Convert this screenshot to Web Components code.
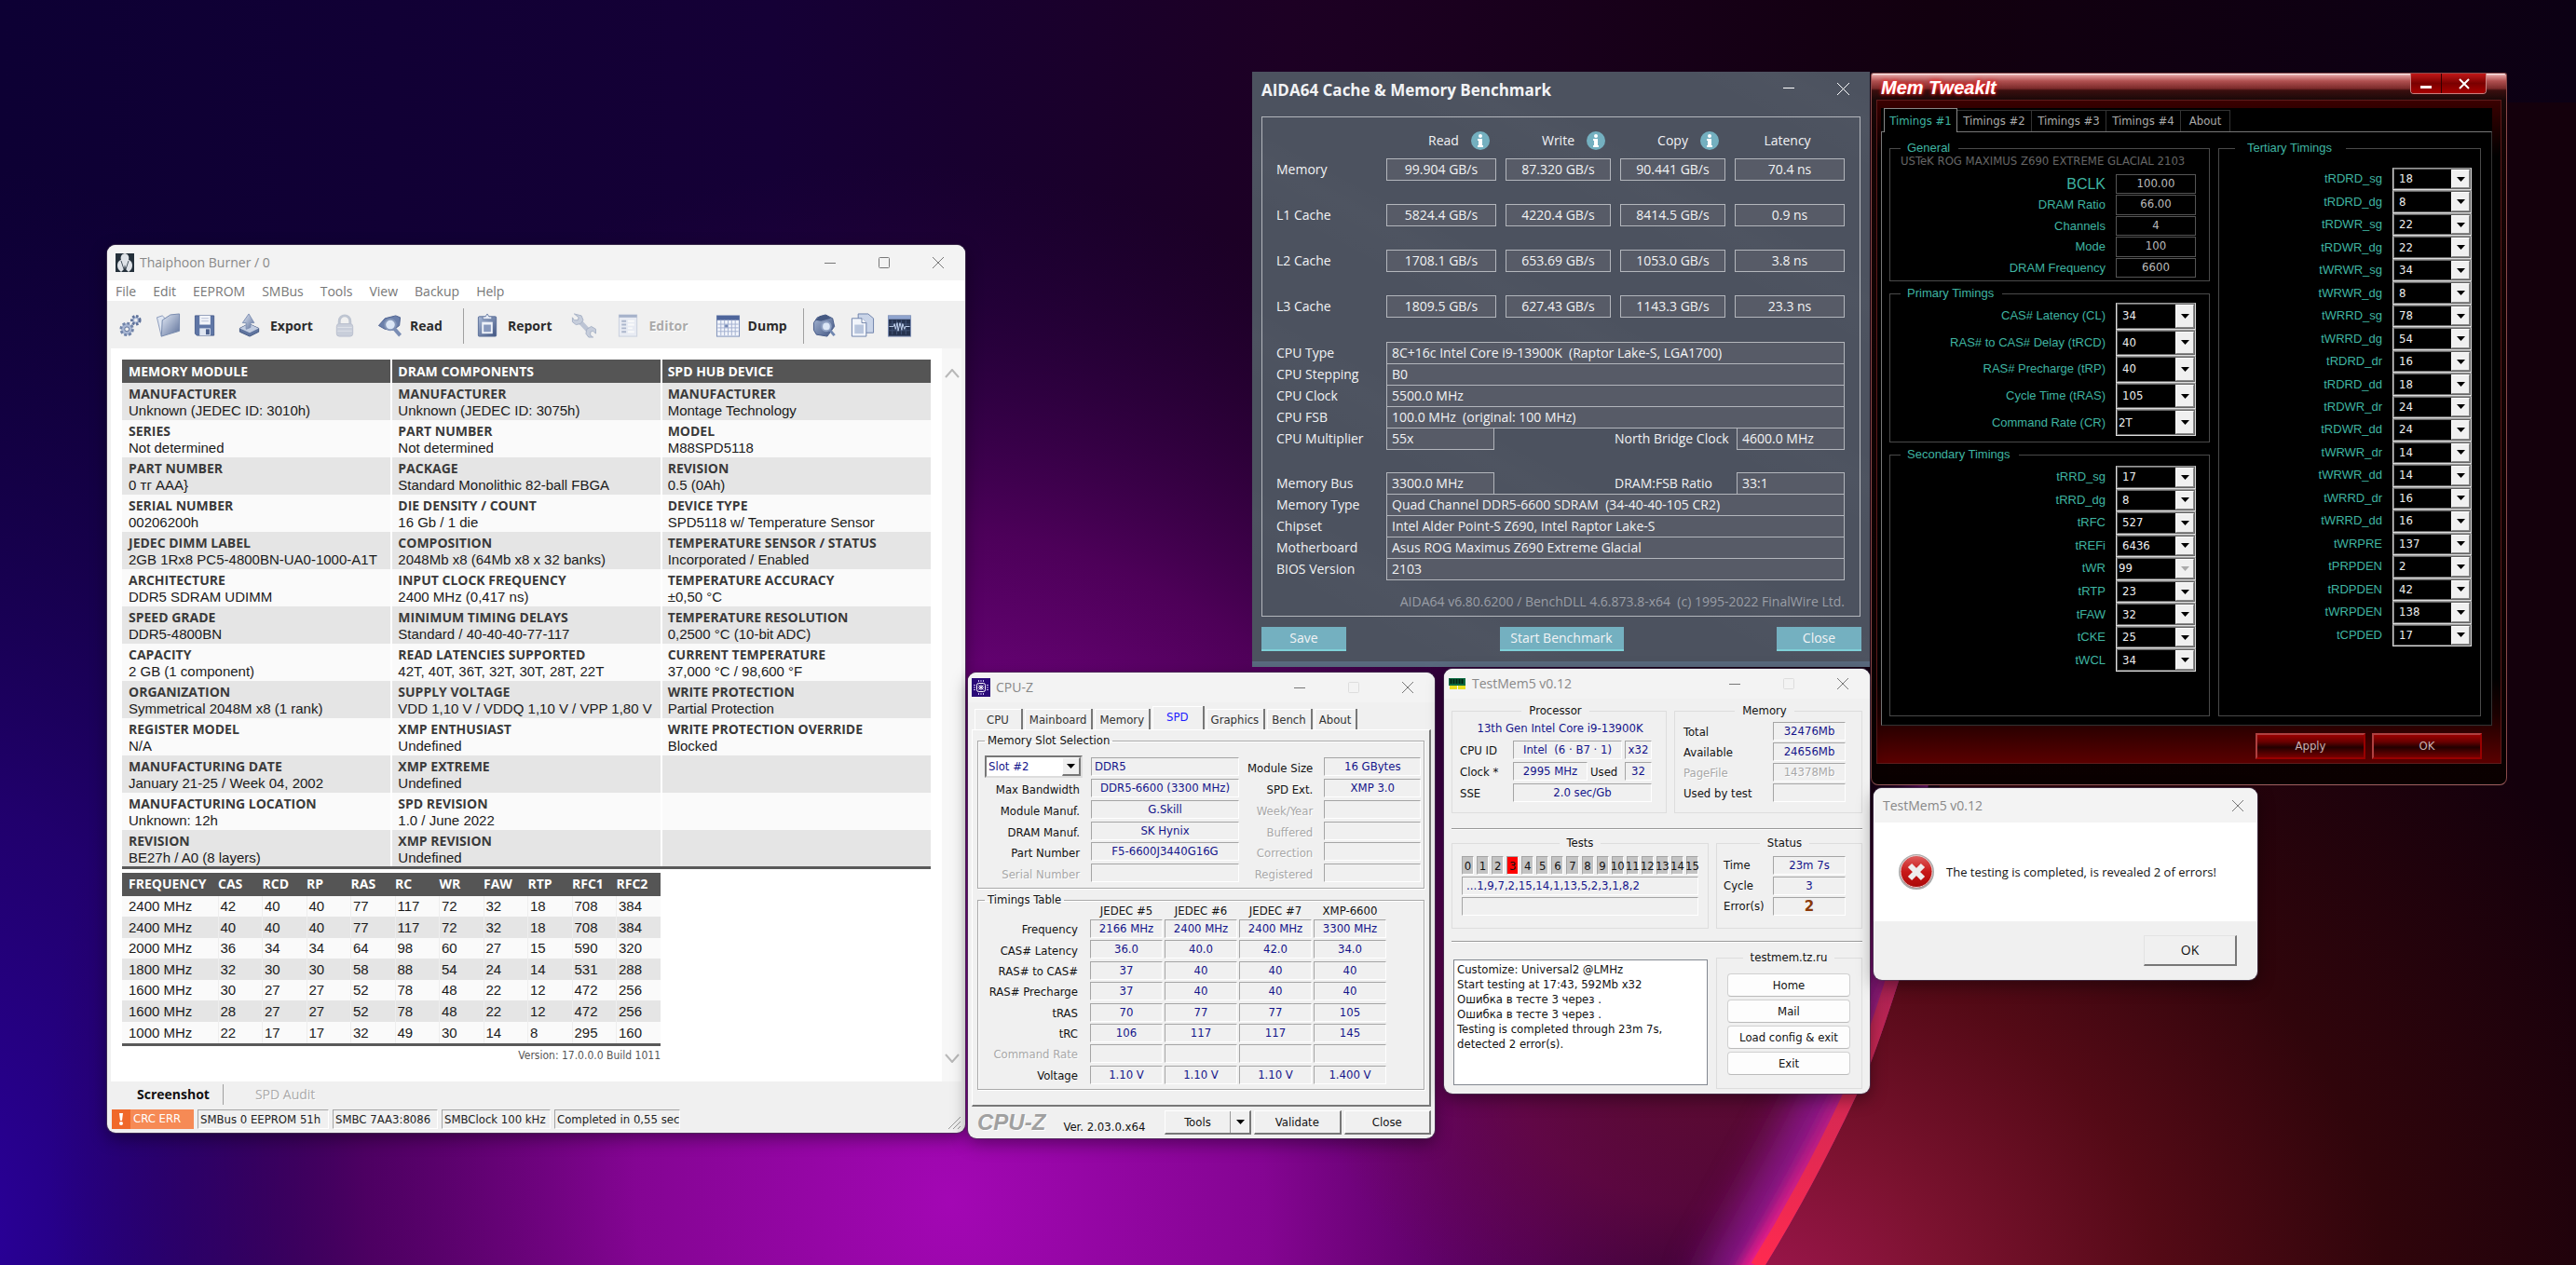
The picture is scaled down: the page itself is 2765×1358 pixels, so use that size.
<!DOCTYPE html>
<html lang="en">
<head>
<meta charset="utf-8">
<title>Desktop</title>
<style>
html,body{margin:0;height:100%;background:#12002e}
body{--ui:"Open Sans","Noto Sans",sans-serif;--tahoma:"DejaVu Sans Condensed","DejaVu Sans","Noto Sans",sans-serif;--arial:"Liberation Sans",sans-serif;font:13px/16px var(--tahoma);color:#111}
</style>
</head>
<body>
<desk-top>
  <thaiphoon-window></thaiphoon-window>
  <aida-window></aida-window>
  <tweak-window></tweak-window>
  <cpuz-window></cpuz-window>
  <testmem-window></testmem-window>
  <message-box></message-box>
</desk-top>
<script>
const base = `*{box-sizing:border-box}button,select,textarea{font:inherit;color:inherit;margin:0}h1,p{margin:0}table{border-collapse:collapse}`;
function define(name, css, html) {
  customElements.define(name, class extends HTMLElement {
    constructor() {
      super();
      const root = this.attachShadow({mode: 'open'});
      const t = document.createElement('template');
      t.innerHTML = `<style>${base}${css}</style>${typeof html === 'function' ? html(this) : html}`;
      root.append(t.content.cloneNode(true));
    }
  });
}

/* wallpaper and the free canvas for the windows */
define('desk-top', `
:host{display:block;position:relative;min-height:100vh;overflow:hidden}
svg{position:absolute;inset:0;width:100%;height:100%}
::slotted(*){position:absolute}`,
`<svg viewBox="0 0 2765 1358" preserveAspectRatio="none" aria-hidden="true">
<defs>
<linearGradient id="sky" x1="0" y1="0" x2="1" y2="0"><stop offset="0" stop-color="#0d0034"/><stop offset=".3" stop-color="#150036"/><stop offset=".5" stop-color="#1d0024"/><stop offset=".75" stop-color="#12000f"/><stop offset="1" stop-color="#0c0014"/></linearGradient>
<radialGradient id="blue" gradientUnits="userSpaceOnUse" cx="0" cy="0" r="1" gradientTransform="translate(-40 1330) scale(700 1150)"><stop offset="0" stop-color="#2a009c"/><stop offset=".4" stop-color="#270080" stop-opacity=".75"/><stop offset="1" stop-color="#1a0050" stop-opacity="0"/></radialGradient>
<radialGradient id="mag" gradientUnits="userSpaceOnUse" cx="0" cy="0" r="1" gradientTransform="translate(1020 1290) rotate(-12) scale(960 1120)"><stop offset="0" stop-color="#a307b4"/><stop offset=".35" stop-color="#8a0598" stop-opacity=".95"/><stop offset=".65" stop-color="#5e0068" stop-opacity=".75"/><stop offset="1" stop-color="#2a0040" stop-opacity="0"/></radialGradient>
<radialGradient id="wine" gradientUnits="userSpaceOnUse" cx="0" cy="0" r="1" gradientTransform="translate(1830 1130) scale(420 330)"><stop offset="0" stop-color="#5a0c2e"/><stop offset=".5" stop-color="#6a0a40" stop-opacity=".7"/><stop offset="1" stop-color="#70084c" stop-opacity="0"/></radialGradient>
<radialGradient id="right" gradientUnits="userSpaceOnUse" cx="0" cy="0" r="1" gradientTransform="translate(1880 1400) scale(1050 900)"><stop offset="0" stop-color="#a01650"/><stop offset=".2" stop-color="#7c1230"/><stop offset=".42" stop-color="#540a16"/><stop offset=".65" stop-color="#30050b"/><stop offset="1" stop-color="#14000c"/></radialGradient>
<linearGradient id="core" gradientUnits="userSpaceOnUse" x1="0" y1="1000" x2="0" y2="1358"><stop offset="0" stop-color="#8c1c50"/><stop offset=".35" stop-color="#c82854"/><stop offset="1" stop-color="#ff2a50"/></linearGradient>
<linearGradient id="glow" gradientUnits="userSpaceOnUse" x1="0" y1="1000" x2="0" y2="1358"><stop offset="0" stop-color="#7a1860"/><stop offset=".4" stop-color="#a01c80"/><stop offset="1" stop-color="#f01c88"/></linearGradient>
<filter id="soft" x="-60%" y="-20%" width="220%" height="140%"><feGaussianBlur stdDeviation="22"/></filter>
<filter id="soft2" x="-60%" y="-20%" width="220%" height="140%"><feGaussianBlur stdDeviation="7"/></filter>
<clipPath id="in"><path d="M0 0H2120Q2085 880 2038 1053Q2007 1150 1993 1175Q1946 1275 1895 1358H0Z"/></clipPath>
</defs>
<rect width="2765" height="1358" fill="url(#sky)"/>
<rect width="2765" height="1358" fill="url(#blue)"/>
<rect width="2765" height="1358" fill="url(#mag)"/>
<rect width="2765" height="1358" fill="url(#wine)"/>
<path d="M2120 560Q2085 880 2038 1053Q2007 1150 1993 1175Q1946 1275 1895 1358H2765V110H2120Z" fill="url(#right)"/>
<g clip-path="url(#in)">
<path d="M2100 820Q2060 980 2020 1053Q1980 1150 1965 1185Q1920 1275 1850 1398" fill="none" stroke="#9a1ca0" stroke-width="70" filter="url(#soft)" opacity=".8"/>
<path d="M2100 820Q2060 980 2028 1053Q1993 1150 1979 1180Q1932 1275 1865 1388" fill="none" stroke="url(#glow)" stroke-width="24" filter="url(#soft2)"/>
<path d="M2100 820Q2065 980 2036 1053Q2005 1150 1991 1175Q1944 1275 1890 1362" fill="none" stroke="url(#core)" stroke-width="24"/>
</g></svg><slot></slot>`);

/* Windows 11 frame: title bar, caption buttons and content */
define('win-frame', `
:host{display:block;background:#f0f0f0;border-radius:9px;overflow:hidden;box-shadow:0 0 0 1px #4a3a55aa,0 6px 18px #0006;height:100%}
header{display:flex;align-items:center;height:var(--bar,32px);background:#f3f3f3;padding-left:var(--pad,8px)}
h1{flex:1;margin-left:6px;font:400 14px/20px var(--ui);color:#888}
button{width:var(--cap,58px);height:100%;border:0;background:none;padding:0;display:grid;place-items:center}
svg{display:block}`,
el => {
  const m = el.getAttribute('buttons') || 'close', faded = m === 'fixed';
  return `<header><slot name="icon"></slot><h1>${el.getAttribute('heading')}</h1>${m !== 'close' ? `<button aria-label="Minimize"><svg width="14" height="14" fill="none" stroke="#777"><path d="M1 7.500H13"/></svg></button>
<button aria-label="Maximize" ${faded ? 'disabled' : ''}><svg width="14" height="14" fill="none" stroke="${faded ? '#ddd' : '#777'}"><rect x="1.500" y="1.500" width="11" height="11" rx="1"/></svg></button>` : ''}
<button aria-label="Close"><svg width="14" height="14" fill="none" stroke="#777"><path d="M1 1L13 13M13 1L1 13"/></svg></button></header><slot></slot>`;
});

/* titled frame */
define('group-box', `
:host{display:block}
fieldset{margin:0;min-width:0;height:100%;border:1px solid var(--line,#a9a9a9);box-shadow:var(--shade,none);padding:var(--inset,0)}
legend{padding:var(--lp,0 3px);margin:var(--lm,0);line-height:var(--lh,16px);color:var(--lc,inherit);font:var(--lf,inherit)}`,
el => `<fieldset><legend>${el.getAttribute('heading')}</legend><slot></slot></fieldset>`);

/* read-only sunken value */
define('value-box', `
:host{display:block;height:20px;border:1px solid #a5a5a5;border-right-color:#fff;border-bottom-color:#fff;text-align:center;color:#14148a;white-space:pre;overflow:hidden;font:13px/18px var(--tahoma)}
:host([off]){color:#a8a8a8;text-shadow:1px 1px #fff}`, `<slot></slot>`);

/* ---------- toolbar pictures ---------- */
const tint = `<defs><linearGradient id="g" x1="0" y1="0" x2="1" y2="1"><stop offset="0" stop-color="#e3eaf6"/><stop offset="1" stop-color="#5d7099"/></linearGradient><linearGradient id="d" x1="0" y1="0" x2="1" y2="1"><stop offset="0" stop-color="#a9b9d6"/><stop offset="1" stop-color="#3f5380"/></linearGradient></defs>`;
const pics = {
 gears:`<circle cx="9" cy="18" r="6.500" fill="#a8b6d2" stroke="#7083a8" stroke-width="3" stroke-dasharray="3 2"/><circle cx="9" cy="18" r="5" fill="#a8b6d2"/><circle cx="9" cy="18" r="2.500" fill="#f0f0f0" stroke="#5d7099"/><circle cx="19" cy="8" r="4.500" fill="#a8b6d2" stroke="#5d7099" stroke-width="3" stroke-dasharray="2.400 1.800"/><circle cx="19" cy="8" r="1.800" fill="#f0f0f0"/>`,
 folder:`<path d="M1 5L7 3L10 6L14 5L14 22L6 26Z" fill="#dfe6f2" stroke="#8a9aba"/><path d="M13 4L16 2L26 1V20L6 26L7 8Z" fill="url(#g)" stroke="#7789ad"/>`,
 floppy:`<path d="M2 3H23V25H4L2 23Z" fill="#5f76a6" stroke="#4b5f8c"/><rect x="7" y="3" width="12" height="10" fill="#f3f5fa"/><path d="M9 6H17M9 9H17" stroke="#b7c1d6"/><rect x="7" y="17" width="12" height="8" fill="#dfe5f0"/><rect x="14" y="18" width="4" height="6" fill="#4b5f8c"/>`,
 export:`<path d="M2 17L12 12L23 17V21L13 26L2 21Z" fill="#60759f" stroke="#40547f"/><path d="M2 17L12 12L23 17L13 22Z" fill="#c2cde1"/><path d="M9 18V11H5L12 1L18 11H14V16Z" fill="url(#g)" stroke="#7e90b3"/>`,
 lock:`<g opacity=".7"><path d="M7 13V9A6 6 0 0 1 19 9V13" fill="none" stroke="#a9b2c4" stroke-width="3"/><rect x="4" y="12" width="18" height="14" rx="3" fill="#b7bfd0" stroke="#a2abc0"/><path d="M5 16H21M5 20H21" stroke="#d7dce6"/></g>`,
 read:`<path d="M1 14L8 6L20 3L25 5L24 14L17 19L8 18Z" fill="#6b80ab" stroke="#4d6190"/><circle cx="14" cy="13" r="6" fill="#dbe6f6" stroke="#8597b9" stroke-width="2"/><path d="M18 17L25 25" stroke="#7a8db4" stroke-width="4"/>`,
 report:`<rect x="3" y="4" width="20" height="22" rx="1" fill="url(#d)" stroke="#5b6e98"/><path d="M8 7V4H11L13 1L15 4H18V7Z" fill="#e6ebf5" stroke="#6d80a6"/><rect x="7" y="10" width="12" height="13" fill="#eef2f9"/><rect x="9" y="13" width="8" height="8" fill="#8899bd"/>`,
 wrench:`<path d="M7 7L20 21" stroke="#bcc4d4" stroke-width="5"/><path d="M3 1L8 5L7 8L3 8L1 5V10L5 13L10 12L13 8L11 3Z" fill="#c6cddb" stroke="#a8b2c6"/><path d="M17 18L22 15L27 18V23L24 20L21 21L21 25L24 27H19L16 23Z" fill="#c6cddb" stroke="#a8b2c6"/>`,
 editor:`<g opacity=".65"><rect x="3" y="2" width="20" height="24" fill="#e3e9f4" stroke="#b5bfd3"/><rect x="3" y="2" width="20" height="3" fill="#7f91b5"/><path d="M6 9H11M6 13H11M6 17H11M6 21H11" stroke="#8797b8" stroke-width="2"/><path d="M13 9H20M13 13H20M13 17H18M13 21H20" stroke="#fff" stroke-width="2"/></g>`,
 dump:`<rect x="1" y="3" width="25" height="23" fill="#f1f4fb" stroke="#7c8fb7"/><rect x="1" y="3" width="25" height="5" fill="#4e659b"/><path d="M5.500 8V25M9.500 8V25M13.500 8V25M17.500 8V25M21.500 8V25M2 12.500H25M2 16.500H25M2 20.500H25" stroke="#a3b1d0"/><rect x="10" y="13" width="3" height="3" fill="#7388b5"/>`,
 find:`<path d="M1 11L5 5L14 2L22 6L24 15L16 26L4 24L1 19Z" fill="url(#d)" stroke="#465a87"/><path d="M3 8L8 3L15 2L20 6L9 9Z" fill="#455982"/><circle cx="15" cy="15" r="5" fill="#dce7f7" stroke="#8fa1c3" stroke-width="2"/><path d="M19 19L24 25" stroke="#7187b0" stroke-width="3"/>`,
 copy:`<path d="M9 1H20L26 6V22H9Z" fill="#c9d4e8" stroke="#6d81aa"/><path d="M2 6H13L18 11V26H2Z" fill="#f2f5fb" stroke="#6d81aa"/><rect x="5" y="13" width="10" height="10" fill="#b8c5dd"/><path d="M13 6V11H18" fill="#fff" stroke="#6d81aa"/>`,
 wave:`<rect x="1" y="3" width="25" height="23" fill="#26334f" stroke="#7b8cb2"/><rect x="1" y="3" width="25" height="4" fill="#8fa3cd"/><path d="M5.500 8V24M10.500 8V24M15.500 8V24M20.500 8V24M2 12.500H25M2 19.500H25" stroke="#435578"/><path d="M2 15H7L8 12L9 18L11 11L12 20L14 11L16 19L17 12L19 18L20 15H25" fill="none" stroke="#c6d6f3"/>`
};
define('tool-button', `
:host{display:flex}
button{display:flex;align-items:center;border:0;background:none;padding:0;gap:8px;font:700 14px/20px var(--ui);color:#2b2b2b}
:host([wide]) button{padding:0 8px}
button:disabled{color:#aaa;text-shadow:1px 1px #fff}svg{display:block}`,
el => `<button ${el.hasAttribute('off') ? 'disabled' : ''} aria-label="${el.getAttribute('pic')}"><svg width="27" height="27" viewBox="0 0 27 28">${tint}${pics[el.getAttribute('pic')]}</svg><slot></slot></button>`);

/* ---------- Thaiphoon Burner ---------- */
const spd = [
['MANUFACTURER','Unknown (JEDEC ID: 3010h)','MANUFACTURER','Unknown (JEDEC ID: 3075h)','MANUFACTURER','Montage Technology'],
['SERIES','Not determined','PART NUMBER','Not determined','MODEL','M88SPD5118'],
['PART NUMBER','0 тг AAA}','PACKAGE','Standard Monolithic 82-ball FBGA','REVISION','0.5 (0Ah)'],
['SERIAL NUMBER','00206200h','DIE DENSITY / COUNT','16 Gb / 1 die','DEVICE TYPE','SPD5118 w/ Temperature Sensor'],
['JEDEC DIMM LABEL','2GB 1Rx8 PC5-4800BN-UA0-1000-A1T','COMPOSITION','2048Mb x8 (64Mb x8 x 32 banks)','TEMPERATURE SENSOR / STATUS','Incorporated / Enabled'],
['ARCHITECTURE','DDR5 SDRAM UDIMM','INPUT CLOCK FREQUENCY','2400 MHz (0,417 ns)','TEMPERATURE ACCURACY','±0,50 °C'],
['SPEED GRADE','DDR5-4800BN','MINIMUM TIMING DELAYS','Standard / 40-40-40-77-117','TEMPERATURE RESOLUTION','0,2500 °C (10-bit ADC)'],
['CAPACITY','2 GB (1 component)','READ LATENCIES SUPPORTED','42T, 40T, 36T, 32T, 30T, 28T, 22T','CURRENT TEMPERATURE','37,000 °C / 98,600 °F'],
['ORGANIZATION','Symmetrical 2048M x8 (1 rank)','SUPPLY VOLTAGE','VDD 1,10 V / VDDQ 1,10 V / VPP 1,80 V','WRITE PROTECTION','Partial Protection'],
['REGISTER MODEL','N/A','XMP ENTHUSIAST','Undefined','WRITE PROTECTION OVERRIDE','Blocked'],
['MANUFACTURING DATE','January 21-25 / Week 04, 2002','XMP EXTREME','Undefined','',''],
['MANUFACTURING LOCATION','Unknown: 12h','SPD REVISION','1.0 / June 2022','',''],
['REVISION','BE27h / A0 (8 layers)','XMP REVISION','Undefined','','']];
const freq = ['2400 42 40 40 77 117 72 32 18 708 384','2400 40 40 40 77 117 72 32 18 708 384','2000 36 34 34 64 98 60 27 15 590 320','1800 32 30 30 58 88 54 24 14 531 288','1600 30 27 27 52 78 48 22 12 472 256','1600 28 27 27 52 78 48 22 12 472 256','1000 22 17 17 32 49 30 14 8 295 160'];
define('thaiphoon-window', `
:host{display:block;left:115px;top:263px;width:921px;height:953px}
win-frame{--bar:38px;--pad:9px}
nav{display:flex;gap:18px;background:#fff;height:22px;padding:2px 0 0 9px;align-items:center}
nav button{border:0;background:none;padding:0;font:14px/20px var(--ui);color:#777}
.bar{display:flex;align-items:center;height:51px;padding:2px 0 0 12px}
.bar hr{width:1px;height:38px;border:0;margin:0;background:#a0a0a0}
.bar div{display:flex;gap:13px;align-items:center}
.a{width:370px}.b{width:364px;padding-left:4px}.c{padding-left:9px}
main{display:flex;background:#fff;margin:0 4px;height:787px}
.page{flex:1;padding:12px 12px 0}
aside{width:21px;background:#f7f7f7;display:flex;flex-direction:column;justify-content:space-between;align-items:center;padding:22px 0 20px}
table{table-layout:fixed;font:15px/17px var(--arial);color:#1a1a1a;border-bottom:3px solid #595959}
th{background:#555;color:#fff;font:700 14px/18px var(--ui);text-align:left;padding:0 0 0 7px;height:25px}
td{padding:0 0 0 7px;white-space:nowrap}
.spd{width:868px}.spd td{height:40px;padding-top:2px;vertical-align:top}
.spd td+td,.spd th+th{border-left:2px solid #fff;padding-left:6px}
b{display:block;font:700 14px/19px var(--ui);color:#3a3a3a}
tbody tr:nth-child(odd) td{background:#e5e5e5}tbody tr:nth-child(even) td{background:#fafafa}
.fr{width:578px;height:186px;margin-top:4px}.fr th:not(:first-child),.fr td:not(:first-child){padding-left:2px}
.fr th:first-child{width:103px}.fr th:not(:first-child){padding-left:0}
.fr td+td{border-left:1px solid #eee}
.fr tbody tr:nth-child(odd) td{background:#fafafa}.fr tbody tr:nth-child(even) td{background:#e5e5e5}
.ver{width:578px;text-align:right;font:12px/20px var(--tahoma);color:#555}
.tabs{display:flex;height:28px;padding-left:32px;margin-bottom:2px;align-items:center;font:700 14px/20px var(--ui)}
.tabs button{border:0;background:none;padding:0}.tabs button+button{border-left:1px solid #a0a0a0;margin-left:14px;padding-left:34px;font:14px/22px var(--ui);color:#aaa;text-shadow:1px 1px #fff}
footer{display:flex;gap:4px;padding:0 5px;height:21px;font:13px/20px var(--tahoma);color:#222}
footer span{border:1px solid #a5a5a5;border-right-color:#fff;border-bottom-color:#fff;padding-left:2px;white-space:nowrap;overflow:hidden}
footer .crc{display:flex;border:0;padding:0;background:#f68a55;color:#fff;width:88px}
.crc i{width:20px;background:#f0682a;display:grid;place-items:center;margin-right:3px}
footer>svg{margin-left:auto;align-self:end}`,
`<win-frame heading="Thaiphoon Burner / 0" buttons="all">
<svg slot="icon" width="20" height="20" viewBox="0 0 20 20"><rect width="20" height="20" fill="#24303a"/><path d="M10 0C6 1 5 4 6 7C2 8 1 13 3 17L6 20L9 17L10 12L11 17L14 20L17 17C19 13 18 8 14 7C15 4 14 1 10 0Z" fill="#dfe3e8"/><path d="M6 8L9 17M14 8L11 17" stroke="#4a5661"/></svg>
<nav>${['File','Edit','EEPROM','SMBus','Tools','View','Backup','Help'].map(x=>`<button>${x}</button>`).join('')}</nav>
<div class="bar"><div class="a"><tool-button pic="gears"></tool-button><tool-button pic="folder"></tool-button><tool-button pic="floppy"></tool-button><tool-button wide pic="export">Export</tool-button><tool-button pic="lock" off></tool-button><tool-button wide pic="read">Read</tool-button></div><hr>
<div class="b"><tool-button wide pic="report">Report</tool-button><tool-button pic="wrench" off></tool-button><tool-button wide pic="editor" off>Editor</tool-button><tool-button wide pic="dump">Dump</tool-button></div><hr>
<div class="c"><tool-button pic="find"></tool-button><tool-button pic="copy"></tool-button><tool-button pic="wave"></tool-button></div></div>
<main><div class="page">
<table class="spd"><thead><tr><th>MEMORY MODULE</th><th>DRAM COMPONENTS</th><th>SPD HUB DEVICE</th></tr></thead><tbody>${spd.map(r=>`<tr>${[0,2,4].map(i=>`<td><b>${r[i]}</b>${r[i+1]}</td>`).join('')}</tr>`).join('')}</tbody></table>
<table class="fr"><thead><tr>${'FREQUENCY CAS RCD RP RAS RC WR FAW RTP RFC1 RFC2'.split(' ').map(x=>`<th>${x}</th>`).join('')}</tr></thead><tbody>${freq.map(r=>`<tr>${r.split(' ').map((x,i)=>`<td>${x}${i?'':' MHz'}</td>`).join('')}</tr>`).join('')}</tbody></table>
<p class="ver">Version: 17.0.0.0 Build 1011</p></div>
<aside><svg width="16" height="10" fill="none" stroke="#b8b8b8" stroke-width="2"><path d="M1 9L8 1L15 9"/></svg><svg width="16" height="10" fill="none" stroke="#b8b8b8" stroke-width="2"><path d="M1 1L8 9L15 1"/></svg></aside></main>
<div class="tabs"><button>Screenshot</button><button>SPD Audit</button></div>
<footer><span class="crc"><i><svg width="4" height="13" fill="#fff"><path d="M0 0H4L3 8H1Z"/><circle cx="2" cy="11" r="2"/></svg></i>CRC ERR</span><span style="width:141px">SMBus 0 EEPROM 51h</span><span style="width:113px">SMBC 7AA3:8086</span><span style="width:117px">SMBClock 100 kHz</span><span>Completed in 0,55 sec</span><svg width="14" height="14" stroke="#999"><path d="M1 14L14 1M6 14L14 6M11 14L14 11"/></svg></footer>
</win-frame>`);

/* ---------- AIDA64 ---------- */
const info = `<svg width="20" height="20"><circle cx="10" cy="10" r="10" fill="#74b0c0"/><circle cx="10" cy="5" r="2" fill="#fff"/><path d="M7 8H12V15H13V17H7V15H8V10H7Z" fill="#fff"/></svg>`;
const line = (l, v) => `<div class="ln"><span>${l}</span><output>${v}</output></div>`;
const pair = (l, v, l2, v2) => `<div class="ln two"><span>${l}</span><output>${v}</output><span>${l2}</span><output>${v2}</output></div>`;
define('aida-window', `
:host{display:block;left:1344px;top:77px;width:663px;font:14px/24px var(--ui);color:#f2f3f5;background:repeating-linear-gradient(28deg,#ffffff00 0 90px,#ffffff03 140px,#ffffff00 170px),#4c525f;border-bottom:6px solid #5a6a7f}
header{display:flex;height:48px;padding-left:10px;align-items:flex-start}
h1{flex:1;font:700 17px/24px var(--ui);padding-top:8px}
header button{width:58px;height:36px;border:0;background:none;display:grid;place-items:center;padding:0}
header button:first-of-type svg{display:block}
section{border:1px solid #b3b6bc;margin:0 10px;padding:0 16px 5px 15px}
table{width:100%;border-collapse:separate;border-spacing:0;table-layout:fixed}
th,td{padding:0;font-weight:400}
tr>:first-child{width:118px;text-align:left}
thead th{height:44px;padding-top:6px}
.h{display:grid;grid-template-columns:1fr auto 1fr;gap:13px;align-items:center}.h span{grid-column:2}.h svg{display:block}
td{height:24px;padding:0 5px;text-align:center}
td output{display:block;height:24px;line-height:22px;border:1px solid #b3b6bc;background:#575b67}
tbody tr+tr>*{padding-top:25px}
tr>*:nth-child(2){padding-left:0}tr td:last-child{padding-right:0}
.g{padding-top:26px}.g+.g{padding-top:24px}
.ln{display:grid;grid-template-columns:118px 1fr}.ln+.ln{margin-top:-1px}
.ln output{height:24px;line-height:22px;border:1px solid #b3b6bc;background:#575b67;padding-left:5px;white-space:pre}
.two{grid-template-columns:118px 116px 1fr 116px}.two span:nth-of-type(2){padding-left:129px}
.f{text-align:right;color:#9a9ea6;margin-top:13px;line-height:20px;white-space:pre}
footer{display:flex;justify-content:space-between;padding:11px 9px 11px 10px}
footer button{height:26px;border:0;border-bottom:2px solid #7fd0d8;background:#74b0c0;width:91px;padding:0;line-height:24px}
footer button:nth-child(2){width:133px}`,
`<header><h1>AIDA64 Cache &amp; Memory Benchmark</h1><button aria-label="Minimize"><svg width="12" height="12"><path d="M0 5.500H12" stroke="#fff"/></svg></button><button aria-label="Close"><svg width="13" height="13"><path d="M0 0L13 13M13 0L0 13" stroke="#fff"/></svg></button></header>
<section><table><thead><tr><th></th><th><div class="h"><span>Read</span>${info}</div></th><th><div class="h"><span>Write</span>${info}</div></th><th><div class="h"><span>Copy</span>${info}</div></th><th><div class="h"><span>Latency</span></div></th></tr></thead><tbody>
${[['Memory','99.904 GB/s','87.320 GB/s','90.441 GB/s','70.4 ns'],['L1 Cache','5824.4 GB/s','4220.4 GB/s','8414.5 GB/s','0.9 ns'],['L2 Cache','1708.1 GB/s','653.69 GB/s','1053.0 GB/s','3.8 ns'],['L3 Cache','1809.5 GB/s','627.43 GB/s','1143.3 GB/s','23.3 ns']].map(r=>`<tr><th>${r[0]}</th>${r.slice(1).map(x=>`<td><output>${x}</output></td>`).join('')}</tr>`).join('')}</tbody></table>
<div class="g">${line('CPU Type','8C+16c Intel Core i9-13900K  (Raptor Lake-S, LGA1700)')}${line('CPU Stepping','B0')}${line('CPU Clock','5500.0 MHz')}${line('CPU FSB','100.0 MHz  (original: 100 MHz)')}${pair('CPU Multiplier','55x','North Bridge Clock','4600.0 MHz')}</div>
<div class="g">${pair('Memory Bus','3300.0 MHz','DRAM:FSB Ratio','33:1')}${line('Memory Type','Quad Channel DDR5-6600 SDRAM  (34-40-40-105 CR2)')}${line('Chipset','Intel Alder Point-S Z690, Intel Raptor Lake-S')}${line('Motherboard','Asus ROG Maximus Z690 Extreme Glacial')}${line('BIOS Version','2103')}</div>
<p class="f">AIDA64 v6.80.6200 / BenchDLL 4.6.873.8-x64  (c) 1995-2022 FinalWire Ltd.</p></section>
<footer><button>Save</button><button>Start Benchmark</button><button>Close</button></footer>`);

/* ---------- CPU-Z ---------- */
const vb = v => `<value-box>${v}</value-box>`;
define('cpuz-window', `
:host{display:block;left:1039px;top:722px;width:501px;height:500px}
win-frame{--pad:4px}
.tabs{display:flex;height:29px;align-items:flex-end;padding-left:7px;gap:2px}
.tabs button{height:22px;border:0;border-right:2px solid #777;box-shadow:inset 1px 1px #fff;background:none;padding:1px 5px 0;color:#333}
.tabs button:first-child{padding:1px 13px 0}
.tabs .on{height:25px;color:#1a1aff;padding:0 15px 2px}
main{height:405px;margin:0 4px;border:1px solid #fff;border-right:2px solid #777;border-bottom:2px solid #777;padding:3px 5px}
group-box{--shade:1px 1px #fff,inset 1px 1px #fff}
.one{--inset:10px 5px 6px 7px;height:167px}.two{--inset:0 5px 3px 7px;height:212px;margin-top:4px}
.grid{display:grid;grid-template-columns:105px 159px 1fr 104px;grid-auto-rows:minmax(0,1fr);row-gap:3px;height:134px;column-gap:9px}
.grid span{text-align:right;padding-right:3px;line-height:24px;white-space:nowrap}
.off{color:#a8a8a8;text-shadow:1px 1px #fff}
.pick{display:grid;height:24px;align-self:center;border:2px solid #777;border-right-color:#ddd;border-bottom-color:#ddd;background:#fff}
select{grid-area:1/1;appearance:none;border:0;background:none;padding:0 0 0 2px;color:#14148a;border-radius:0}
.pick i{grid-area:1/1;justify-self:end;width:20px;background:#f0f0f0;border:1px solid #fff;border-right:2px solid #777;border-bottom:2px solid #777;display:grid;place-items:center;pointer-events:none}
table{height:197px;margin-top:-5px;table-layout:fixed;width:432px}
th{font-weight:400;padding:0}thead th{height:18px;line-height:16px}
tbody th{text-align:right;padding-right:12px;white-space:nowrap}
tr>:first-child{width:112px}
td{padding:0 1px;vertical-align:top}
footer{display:flex;align-items:center;padding:0 4px 0 10px;height:34px;gap:3px}
.logo{font:italic 700 24px/28px var(--arial);color:#a0a0a0;text-shadow:1px 1px #fff;width:90px}
.ver{width:106px;padding-top:9px;white-space:nowrap}
footer button{height:26px;width:94px;background:#f0f0f0;border:1px solid #fff;border-right:2px solid #777;border-bottom:2px solid #777;padding:0;display:flex;align-items:center;justify-content:center}
.split span{flex:1}.split i{border-left:1px solid #999;height:100%;width:21px;display:grid;place-items:center}`,
`<win-frame heading="CPU-Z" buttons="fixed">
<svg slot="icon" width="20" height="20" viewBox="0 0 20 20"><rect width="20" height="20" fill="#2a0a78"/><rect x="5.500" y="5.500" width="9" height="9" rx="2" fill="none" stroke="#fff"/><path d="M7.500 7.500L12.500 12.500M12.500 7.500L7.500 12.500M10 7V13M7 10H13" stroke="#fff"/><path d="M7.500 2V4M10 2V4M12.500 2V4M7.500 16V18M10 16V18M12.500 16V18M2 7.500H4M2 10H4M2 12.500H4M16 7.500H18M16 10H18M16 12.500H18" stroke="#cbbcf5"/></svg>
<div class="tabs" role="tablist"><button>CPU</button><button>Mainboard</button><button>Memory</button><button class="on">SPD</button><button>Graphics</button><button>Bench</button><button>About</button></div>
<main><group-box class="one" heading="Memory Slot Selection"><div class="grid">
<div class="pick"><select aria-label="Memory slot"><option>Slot #2</option></select><i><svg width="9" height="5"><path d="M0 0H9L4.500 5Z"/></svg></i></div><value-box style="text-align:left;padding-left:3px">DDR5</value-box><span>Module Size</span>${vb('16 GBytes')}
<span>Max Bandwidth</span>${vb('DDR5-6600 (3300 MHz)')}<span>SPD Ext.</span>${vb('XMP 3.0')}
<span>Module Manuf.</span>${vb('G.Skill')}<span class="off">Week/Year</span>${vb('')}
<span>DRAM Manuf.</span>${vb('SK Hynix')}<span class="off">Buffered</span>${vb('')}
<span>Part Number</span>${vb('F5-6600J3440G16G')}<span class="off">Correction</span>${vb('')}
<span class="off">Serial Number</span>${vb('')}<span class="off">Registered</span>${vb('')}</div></group-box>
<group-box class="two" heading="Timings Table"><table><thead><tr><th></th><th>JEDEC #5</th><th>JEDEC #6</th><th>JEDEC #7</th><th>XMP-6600</th></tr></thead><tbody>
${[['Frequency','2166 MHz','2400 MHz','2400 MHz','3300 MHz'],['CAS# Latency','36.0','40.0','42.0','34.0'],['RAS# to CAS#','37','40','40','40'],['RAS# Precharge','37','40','40','40'],['tRAS','70','77','77','105'],['tRC','106','117','117','145'],['Command Rate','','','',''],['Voltage','1.10 V','1.10 V','1.10 V','1.400 V']].map(r=>`<tr><th class="${r[1]?'':'off'}">${r[0]}</th>${r.slice(1).map(x=>`<td>${vb(x)}</td>`).join('')}</tr>`).join('')}</tbody></table></group-box></main>
<footer><span class="logo">CPU-Z</span><span class="ver">Ver. 2.03.0.x64</span><button class="split"><span>Tools</span><i><svg width="9" height="5"><path d="M0 0H9L4.500 5Z"/></svg></i></button><button>Validate</button><button>Close</button></footer>
</win-frame>`);

/* ---------- TestMem5 ---------- */
define('testmem-window', `
:host{display:block;left:1550px;top:718px;width:457px;height:456px}
win-frame{--pad:5px}
main{padding:5px 8px 0}
.row{display:flex;gap:8px}
group-box{--line:#ddd;--lm:0 auto;--lp:0 8px}
.p{width:231px;height:118px;--inset:2px 16px 0 8px}.m{flex:1;height:118px;--inset:4px 17px 0 9px}
.grid{display:grid;row-gap:3px;column-gap:3px}
.grid span{white-space:nowrap;line-height:22px;height:20px}
.cpu{text-align:center;color:#14148a;line-height:18px;margin:0 0 4px 10px}
.p .grid{grid-template-columns:54px 80px 34px 29px}.w2{grid-column:span 2}.w3{grid-column:span 3}
.m .grid,.s .grid{grid-template-columns:1fr 78px;row-gap:2px}
hr{border:0;height:2px;margin:16px 0 6px;background:linear-gradient(#999 50%,#fff 50%)}
.t{width:276px;height:100px;--inset:6px 10px 0}.s{flex:1;height:100px;--inset:6px 17px 0 7px}.s span{line-height:20px}
.cells{display:flex;gap:3px;height:20px;margin-bottom:2px}
.cells span{flex:1 1 0;min-width:0;background:#c3c3c3;border:1px solid #a5a5a5;border-right-color:#fff;border-bottom-color:#fff;line-height:19px;display:flex;justify-content:center}
.cells .bad{background:#f00}
.t value-box{text-align:left;padding-left:4px;margin-bottom:2px}
.err{color:#8a3a0a;font:700 15px/18px "DejaVu Sans",sans-serif}
hr.l{margin:13px 0 8px}
textarea{display:block;width:273px;height:135px;margin:10px 1px 0 2px;resize:none;border:1px solid #828790;background:#fff;border-radius:0;padding:2px 3px;line-height:16px;overflow:hidden}
.h{flex:1;height:149px;--inset:9px 12px 0 11px}
.btns{display:grid;gap:3px}.btns button{height:25px;background:#fdfdfd;border:1px solid #d0d0d0;border-bottom-color:#bbb;border-radius:4px;padding:0}
.off{color:#a8a8a8;text-shadow:1px 1px #fff}`,
`<win-frame heading="TestMem5 v0.12" buttons="fixed">
<svg slot="icon" width="19" height="13"><rect width="18" height="8" fill="#0a6a40"/><path d="M2.500 1V6M5.500 1V6M8.500 1V6M11.500 1V6M14.500 1V6" stroke="#021" stroke-width="2"/><path d="M1 8H9V12H1ZM10 8H18V12H10Z" fill="#e8e020"/></svg>
<main><div class="row"><group-box class="p" heading="Processor"><p class="cpu">13th Gen Intel Core i9-13900K</p><div class="grid"><span>CPU ID</span><value-box class="w2">Intel  (6 · B7 · 1)</value-box>${vb('x32')}<span>Clock *</span>${vb('2995 MHz')}<span>Used</span>${vb('32')}<span>SSE</span><value-box class="w3">2.0 sec/Gb</value-box></div></group-box>
<group-box class="m" heading="Memory"><div class="grid"><span>Total</span>${vb('32476Mb')}<span>Available</span>${vb('24656Mb')}<span class="off">PageFile</span><value-box off>14378Mb</value-box><span>Used by test</span>${vb('')}</div></group-box></div><hr>
<div class="row"><group-box class="t" heading="Tests"><div class="cells">${[...Array(16).keys()].map(i=>`<span class="${i===3?'bad':''}">${i}</span>`).join('')}</div><value-box>...1,9,7,2,15,14,1,13,5,2,3,1,8,2</value-box><value-box></value-box></group-box>
<group-box class="s" heading="Status"><div class="grid"><span>Time</span>${vb('23m 7s')}<span>Cycle</span>${vb('3')}<span>Error(s)</span><value-box><b class="err">2</b></value-box></div></group-box></div><hr class="l">
<div class="row"><textarea readonly aria-label="Log">Customize: Universal2 @LMHz
Start testing at 17:43, 592Mb x32
Ошибка в тесте 3 через .
Ошибка в тесте 3 через .
Testing is completed through 23m 7s,
detected 2 error(s).</textarea>
<group-box class="h" heading="testmem.tz.ru"><div class="btns"><button>Home</button><button>Mail</button><button>Load config &amp; exit</button><button>Exit</button></div></group-box></div></main></win-frame>`);

/* ---------- MemTweakIt ---------- */
define('timing-row', `
:host{display:grid;grid-template-columns:1fr var(--w,86px);column-gap:11px;min-height:0}
label{text-align:right;align-self:center;color:#3fb5a2;white-space:nowrap;font:13px/16px var(--arial)}
.pick{display:grid;min-height:0;border:1px solid #ddd;border-top-color:#999;background:#000;grid-template-rows:minmax(0,1fr)}
select{grid-area:1/1;appearance:none;border:1px solid #666;background:none;padding:0 0 0 5px;color:#eee;border-radius:0;min-height:0}
:host([tight]) select{padding-left:1px}
i{grid-area:1/1;justify-self:end;width:20px;margin:1px;background:#f0f0f0;border:1px solid #fff;border-right-color:#888;border-bottom-color:#888;display:grid;place-items:center;pointer-events:none}
:host([off]) svg{fill:#aaa}`,
el => `<label for="s">${el.getAttribute('label')}</label><div class="pick"><select id="s"><option>${el.getAttribute('value')}</option></select><i><svg width="9" height="5"><path d="M0 0H9L4.500 5Z"/></svg></i></div>`);
const rows = s => s.split(',').map(x => { const [l, v, f] = x.split('='); return `<timing-row label="${l}" value="${v}" ${f || ''}></timing-row>`; }).join('');
define('tweak-window', `
:host{display:block;left:2008px;top:78px;width:683px;height:765px;box-sizing:border-box;padding:0 5px;background:linear-gradient(#fff 0,#e09a9a 2px,#b05050 8px,#7a2a2a 16px,#3a0f0f 18px,#1a0808 28px,#140404 60px,#0a0000);border:1px solid #8a4a4a;border-bottom-color:#a06060;border-radius:3px 3px 8px 8px;font:13px/16px var(--tahoma);color:#bbb}
header{display:flex;height:28px;justify-content:space-between}
h1{font:italic 700 20px/28px var(--arial);color:#fff;text-shadow:0 0 3px #f44,0 0 5px #f00;padding:1px 0 0 5px}
.cap{display:flex;margin-right:16px;height:22px;border:1px solid #c98080;border-top:0;border-radius:0 0 4px 4px;overflow:hidden}
.cap button{width:32px;border:0;padding:0;background:linear-gradient(#c01818,#7a0000 50%,#a80000);display:grid;place-items:center}.cap button+button{width:48px;border-left:1px solid #300}
.in{border:1px solid #5e1c1c;padding:8px 9px 4px 4px;background:linear-gradient(#3a0000,#000 60px 620px,#1c0000 660px,#5a0000)}
.tabs{display:flex;height:25px;align-items:flex-end;padding-left:3px;background:#000}
.tabs button{height:23px;background:#000;border:1px solid #333;border-left:0;border-bottom:0;padding:0 6px;width:80px;white-space:nowrap;color:#aaa}
.tabs button:first-child{height:26px;border:1px solid #888;border-bottom:0;color:#3fb5a2;margin-bottom:-1px;z-index:1;width:79px;padding:0 5px}
.tabs button:last-child{width:53px}
main{display:grid;grid-template-columns:344px 1fr;column-gap:9px;height:638px;background:#000;border:1px solid #777;border-right-color:#333;border-bottom-color:#333;padding:10px 11px 9px 8px}
group-box{--line:#4a4a4a;--lp:0 9px 0 7px;--lm:0 0 0 11px;--lc:#3fb5a2;--lf:13px/14px var(--arial)}
.left{display:grid;row-gap:6px;grid-template-rows:150px 167px minmax(0,1fr)}
.gen{--inset:0 14px 0 0}.pri{--inset:3px 14px 0 0}.sec{--inset:5px 14px 0 0}.ter{--inset:14px 9px 0 0;--lp:0 15px 0 13px;--lm:0 0 0 17px;--w:85px}
.usb{color:#666;line-height:14px;padding-left:11px;white-space:nowrap;margin-bottom:7px}
.g{display:grid;grid-template-columns:1fr 86px;column-gap:11px;height:111px;grid-auto-rows:minmax(0,1fr);row-gap:1px;text-align:right}
.g output{border:1px solid #555;text-align:center;line-height:18px}.g span{color:#3fb5a2;font:13px/22px var(--arial)}.g .big{font-size:16px}
.s5,.s9,.s21{display:grid;grid-auto-rows:minmax(0,1fr)}.s5{height:143px}.s9{height:221px}.s21{height:514px}
footer{display:flex;justify-content:flex-end;gap:7px;padding:8px 11px 0 0}
footer button{width:118px;height:28px;border:2px solid #b04040;border-bottom-color:#900;border-right-color:#900;background:linear-gradient(#900 0,#6a0000 30%,#200 55%,#700);padding:0;color:#c9b0b0}`,
`<header><h1>Mem TweakIt</h1><div class="cap"><button aria-label="Minimize"><svg width="12" height="12"><rect y="8" width="12" height="3" fill="#fff"/></svg></button><button aria-label="Close"><svg width="12" height="12"><path d="M1 1L11 11M11 1L1 11" stroke="#fff" stroke-width="2"/></svg></button></div></header>
<div class="in"><div class="tabs"><button>Timings #1</button><button>Timings #2</button><button>Timings #3</button><button>Timings #4</button><button>About</button></div>
<main><div class="left"><group-box class="gen" heading="General"><p class="usb">USTeK ROG MAXIMUS Z690 EXTREME GLACIAL 2103</p><div class="g"><span class="big">BCLK</span><output>100.00</output><span>DRAM Ratio</span><output>66.00</output><span>Channels</span><output>4</output><span>Mode</span><output>100</output><span>DRAM Frequency</span><output>6600</output></div></group-box>
<group-box class="pri" heading="Primary Timings"><div class="s5">${rows('CAS# Latency (CL)=34,RAS# to CAS# Delay (tRCD)=40,RAS# Precharge (tRP)=40,Cycle Time (tRAS)=105,Command Rate (CR)=2T=tight')}</div></group-box>
<group-box class="sec" heading="Secondary Timings"><div class="s9">${rows('tRRD_sg=17,tRRD_dg=8,tRFC=527,tREFi=6436,tWR=99=tight off,tRTP=23,tFAW=32,tCKE=25,tWCL=34')}</div></group-box></div>
<group-box class="ter" heading="Tertiary Timings"><div class="s21">${rows('tRDRD_sg=18,tRDRD_dg=8,tRDWR_sg=22,tRDWR_dg=22,tWRWR_sg=34,tWRWR_dg=8,tWRRD_sg=78,tWRRD_dg=54,tRDRD_dr=16,tRDRD_dd=18,tRDWR_dr=24,tRDWR_dd=24,tWRWR_dr=14,tWRWR_dd=14,tWRRD_dr=16,tWRRD_dd=16,tWRPRE=137,tPRPDEN=2,tRDPDEN=42,tWRPDEN=138,tCPDED=17')}</div></group-box></main>
<footer><button>Apply</button><button>OK</button></footer></div>`);

/* ---------- message box ---------- */
define('message-box', `
:host{display:block;left:2011px;top:846px;width:412px;height:206px}
win-frame{--bar:37px;--pad:4px;--cap:42px}
main{display:flex;align-items:center;gap:13px;background:#fff;height:106px;padding-left:27px;font:13px/20px var(--ui)}
footer{display:flex;justify-content:flex-end;padding:15px 22px}
footer button{width:100px;height:33px;background:#f0f0f0;border:1px solid #e3e3e3;border-right:2px solid #777;border-bottom:2px solid #777;font:14px/20px var(--ui)}`,
`<win-frame heading="TestMem5 v0.12"><main><svg width="38" height="40" viewBox="0 0 38 40"><defs><linearGradient id="r" x1="0" y1="0" x2="0" y2="1"><stop offset="0" stop-color="#e06060"/><stop offset=".5" stop-color="#c81818"/><stop offset="1" stop-color="#a80808"/></linearGradient></defs><circle cx="19" cy="20" r="18" fill="url(#r)" stroke="#aaa" stroke-width="2"/><circle cx="19" cy="19.500" r="17" fill="none" stroke="#e9caca"/><path d="M12 13L26 27M26 13L12 27" stroke="#eee" stroke-width="6"/></svg><p>The testing is completed, is revealed 2 of errors!</p></main><footer><button>OK</button></footer></win-frame>`);
</script>
</body>
</html>
